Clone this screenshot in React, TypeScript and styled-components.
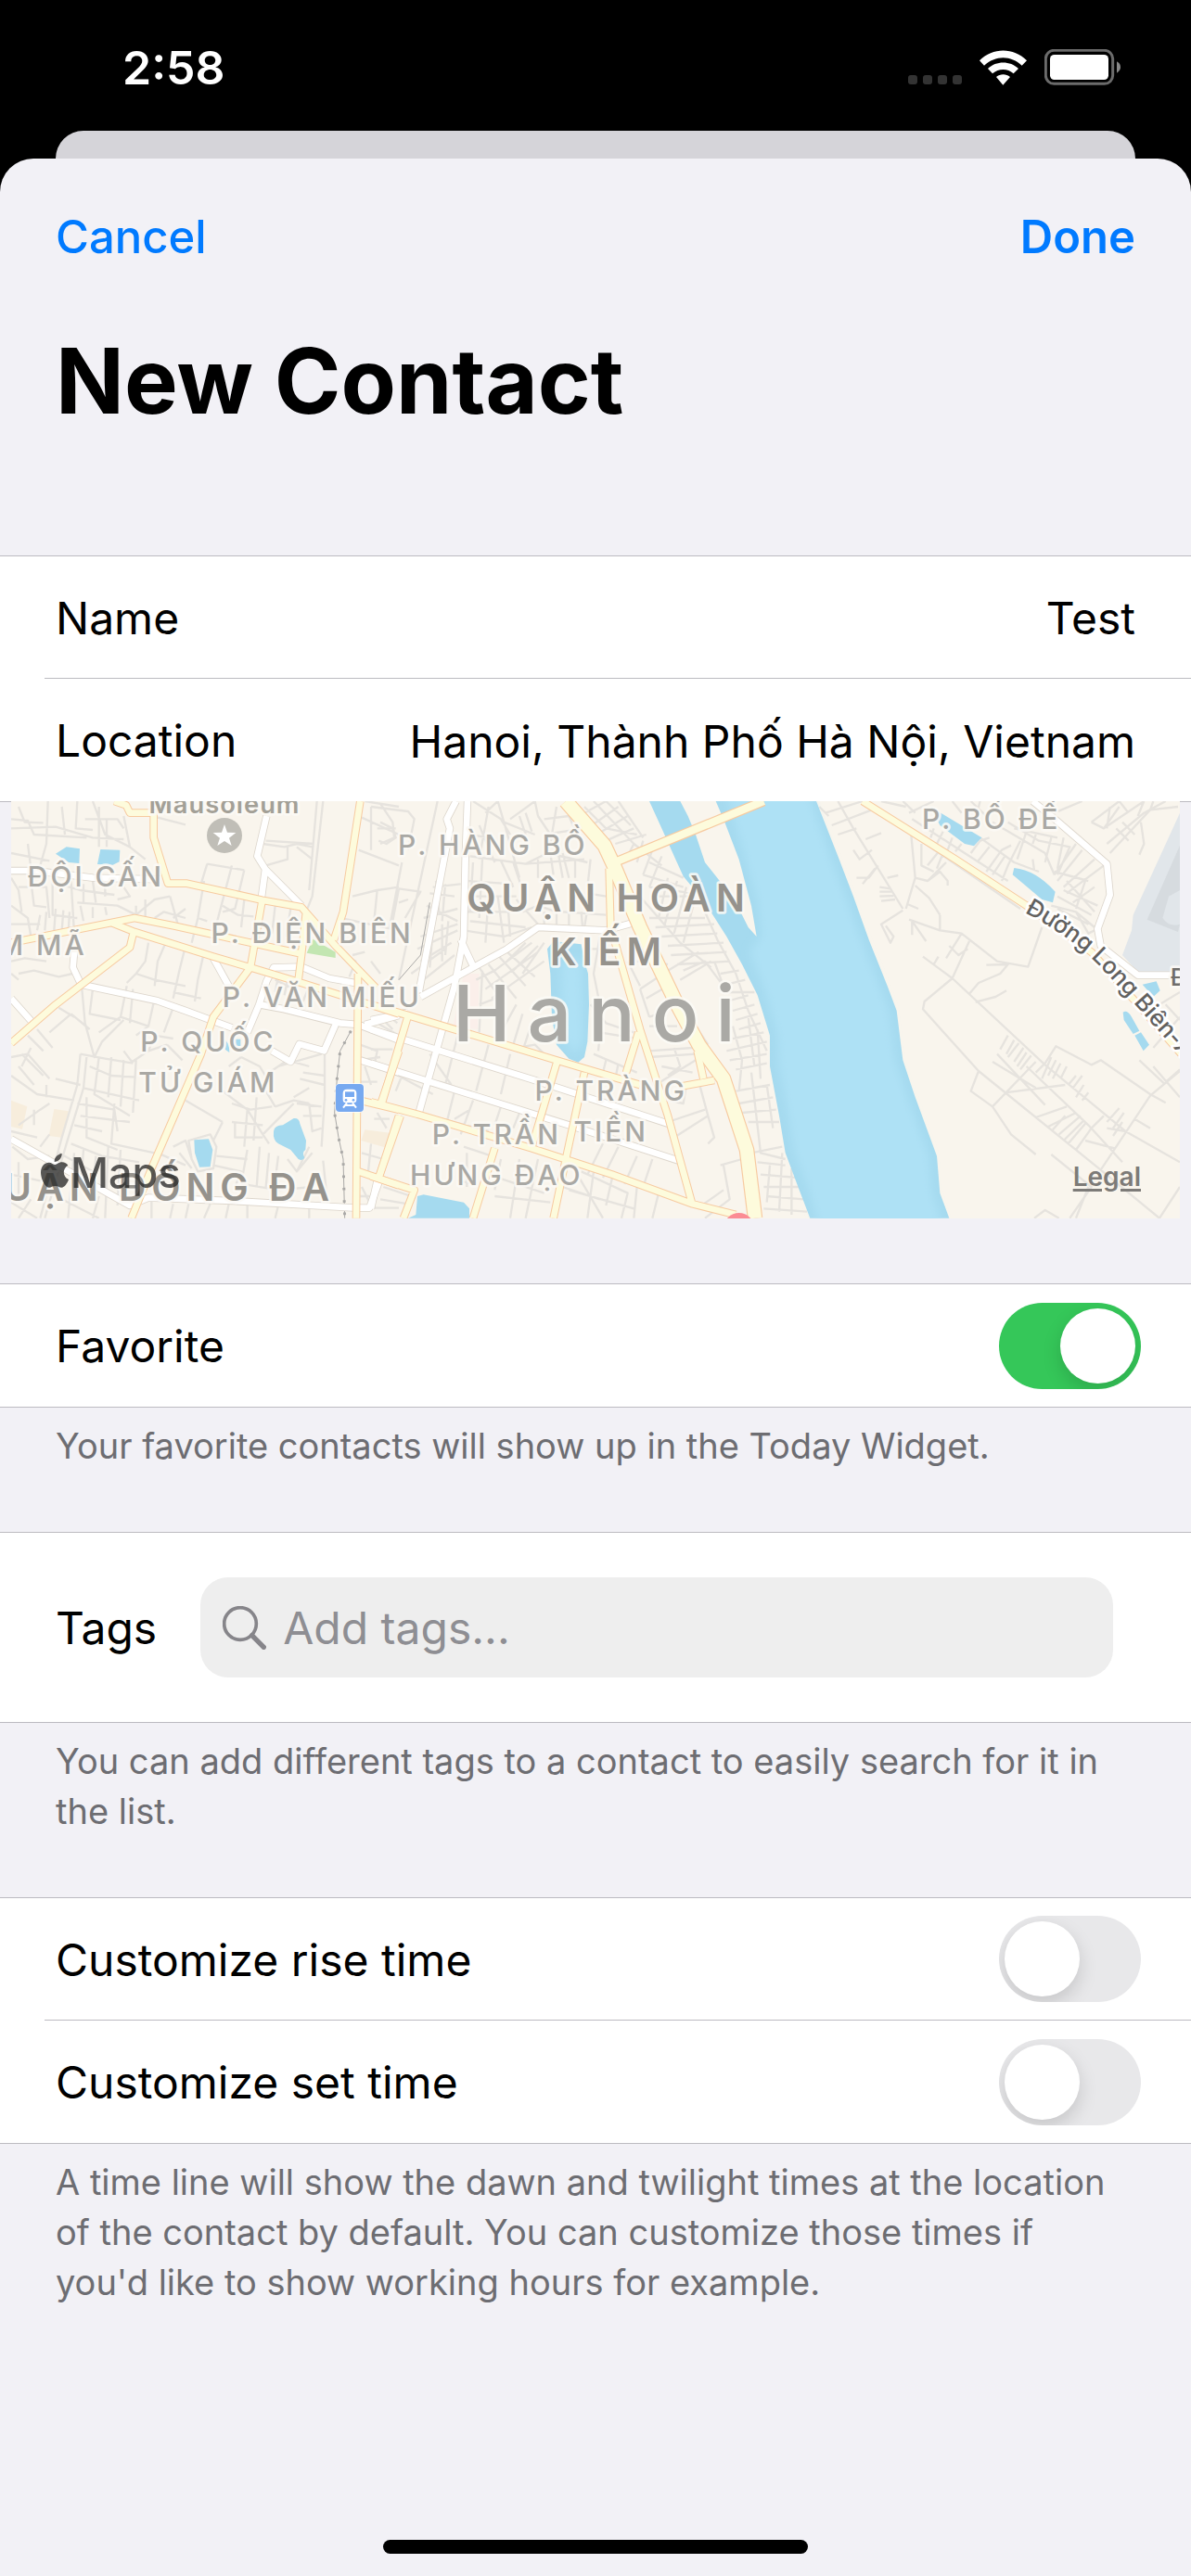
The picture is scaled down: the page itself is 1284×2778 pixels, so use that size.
import React, { useState } from "react";
import styled, { createGlobalStyle } from "styled-components";

const GlobalStyle = createGlobalStyle`
  *, *::before, *::after { box-sizing: border-box; }
  body { margin: 0; background: #000; }
  button, input { font: inherit; color: inherit; }
`;

const color = {
  sheet: "#f2f1f6",
  line: "#bcbbc1",
  blue: "#007aff",
  green: "#35c759",
  footer: "#6d6d72",
  placeholder: "#8e8e93",
};

const Screen = styled.div`
  display: flex;
  flex-direction: column;
  min-height: 100vh;
  background: #000;
  color: #000;
  font-family: Inter, "Liberation Sans", sans-serif;
  font-size: 48px;
  line-height: 60px;
`;

const StatusBar = styled.header`
  display: flex;
  align-items: center;
  justify-content: space-between;
  height: 141px;
  padding: 4px 75px 0 132px;
  color: #fff;
`;

const Clock = styled.time`
  font-size: 50px;
  font-weight: 600;
`;

const StatusIcons = styled.div`
  display: flex;
  align-items: flex-end;
  gap: 19px;
  svg { display: block; }
`;

const Signal = styled.div`
  display: flex;
  gap: 6px;
  margin-bottom: 1px;
`;

const SignalDot = styled.i`
  width: 10px;
  height: 10px;
  border-radius: 3px;
  background: #333;
`;

const BackCard = styled.div`
  height: 30px;
  margin: 0 60px;
  border-radius: 30px 30px 0 0;
  background: #d5d4d9;
`;

const Sheet = styled.main`
  display: flex;
  flex: 1;
  flex-direction: column;
  border-radius: 36px 36px 0 0;
  background: ${color.sheet};
`;

const NavBar = styled.nav`
  display: flex;
  justify-content: space-between;
  padding: 55px 60px 0;
`;

const NavButton = styled.button<{ $strong?: boolean }>`
  padding: 0;
  border: 0;
  background: none;
  color: ${color.blue};
  font-size: 49px;
  font-weight: ${(p) => (p.$strong ? 600 : 500)};
`;

const Title = styled.h1`
  margin: 65px 60px 128px;
  font-size: 97px;
  font-weight: 700;
  line-height: 120px;
`;

const Group = styled.section<{ $open?: boolean }>`
  border-top: 1px solid ${color.line};
  border-bottom: ${(p) => (p.$open ? "0" : `1px solid ${color.line}`)};
  background: #fff;
`;

const Row = styled.div<{ $end?: number; $height?: number }>`
  display: flex;
  align-items: center;
  justify-content: space-between;
  min-height: ${(p) => p.$height ?? 132}px;
  margin-left: 48px;
  padding: 0 ${(p) => p.$end ?? 60}px 0 12px;
  &:not(:last-child) { border-bottom: 1px solid ${color.line}; }
`;

const RowLabel = styled.label`
  padding-top: 2px;
`;

const ValueInput = styled.input`
  flex: 1;
  min-width: 0;
  height: 72px;
  padding: 2px 0 0;
  border: 0;
  outline: 0;
  background: none;
  text-align: right;
`;

const Footer = styled.p`
  margin: 0;
  padding: 14px 60px 66px;
  color: ${color.footer};
  font-size: 38px;
  line-height: 54px;
`;

const Toggle = styled.input`
  flex: none;
  appearance: none;
  width: 153px;
  height: 93px;
  margin: 0;
  padding: 6px;
  overflow: hidden;
  border-radius: 47px;
  background: #e8e8ea;
  &::before {
    content: "";
    display: block;
    width: 81px;
    height: 81px;
    border-radius: 50%;
    background: #fff;
    box-shadow: 0 8px 20px rgba(0, 0, 0, 0.15);
  }
  &:checked { background: ${color.green}; }
  &:checked::before { margin-left: auto; }
`;

const SearchBox = styled.div`
  display: flex;
  flex: 1;
  align-items: center;
  gap: 18px;
  min-width: 0;
  height: 108px;
  margin-left: 47px;
  padding: 0 24px;
  border-radius: 30px;
  background: #eee;
`;

const SearchInput = styled.input`
  flex: 1;
  min-width: 0;
  padding: 2px 0 0;
  border: 0;
  outline: 0;
  background: none;
  &::placeholder { color: ${color.placeholder}; opacity: 1; }
`;

const MapSection = styled.section`
  margin-bottom: 70px;
  padding: 0 12px;
  box-shadow: inset 0 1px ${color.line};
`;

const MapFrame = styled.div`
  position: relative;
  height: 450px;
  overflow: hidden;
  background: #f9f5ed;
`;

const MapDrawing = styled.svg`
  display: block;
  width: 100%;
  height: 100%;
  font-family: Inter, "Liberation Sans", sans-serif;
`;

const MapBrand = styled.div`
  position: absolute;
  left: 32px;
  bottom: 19px;
  display: flex;
  align-items: center;
  gap: 2px;
  color: #222;
  font-size: 45px;
  font-weight: 500;
  line-height: 60px;
  opacity: 0.75;
  svg { margin-bottom: 6px; }
`;

const LegalLink = styled.a`
  position: absolute;
  right: 42px;
  bottom: 29px;
  color: #7d7b78;
  font-size: 28px;
  font-weight: 600;
  line-height: 32px;
  text-decoration: underline;
  text-decoration-thickness: 3px;
  text-underline-offset: 3px;
`;

const HomeIndicator = styled.div`
  width: 458px;
  max-width: 60%;
  height: 15px;
  margin: auto auto 24px;
  border-radius: 8px;
  background: #000;
`;

type Tile = {
  x: number;
  minor: string;
  white: string;
  yellow: string;
  wide?: string;
};

const tiles: Tile[] = [
  {
    x: 0,
    minor:
      "M36 130L180 125L300 160L400 165M155 42L150 180L130 250M36 100L90 105L110 150L280 160M250 42L245 130L300 135M300 42L340 150L420 190M60 60L80 110L140 112M200 60L210 150M275 100L380 100L400 130M320 60V190M345 100V190M400 90L420 190L470 230M36 210L160 235M90 180L100 260M36 290L60 330L70 400M60 320H150L160 420M100 300L110 380L150 385M170 290V410L250 420M190 310L260 330L370 345M230 300L240 470M250 370L380 380L440 410M270 310V370M300 300L310 370M340 310V350M400 320L420 350L380 360M36 380L90 420L100 480M130 410L120 460M150 400L145 460M180 390L175 460M205 395L200 460M225 400L222 450M36 440H130M260 380L270 430M300 385V420M340 385L345 410M440 380V410M440 410L500 360L550 350M470 360V420M500 420L530 400L600 420M550 350L575 440M600 390L560 420M510 95L600 118M500 70L560 60M660 300L640 420L620 500M640 420L670 430M670 245L650 310M670 245L790 265M750 250L700 440M790 265L760 390L720 400M720 380L770 410L820 415M850 180L920 190L960 180L1010 190M860 170L1015 180M930 190V230L860 250M1045 42L1010 350L990 400M1025 42L1000 330M960 190L1010 230M790 360L780 450M890 380L880 470M940 390L925 480M1180 42L1290 60M1170 95L1290 150M1160 200L1290 250M1200 60V200M1230 110L1270 130L1280 160L1250 180L1225 170M1140 350L1220 330L1290 320M1220 330L1210 430M1100 420L1290 460M60 600L110 590L190 610L235 600M36 560L80 550L150 560M36 600L60 620M480 500L470 560L440 600L410 630M540 490L510 560L500 640M600 510L580 590L560 680M660 530L640 620L630 690M440 600L500 620L600 640M560 660L650 680M410 640L390 740L320 790M300 650L290 730L390 750M390 740L480 770M430 650L420 760M500 680L480 770L440 800M560 710L530 790M265 650L275 760L305 870L330 820L400 750M230 730L290 780M230 730L160 790M190 710L240 740M36 870L90 860L160 940M90 800L140 850M120 780L170 840M70 860L140 930M60 900L110 960M100 840L70 900M36 930L120 990L240 1010M260 860L250 960L200 1130L130 1391M280 870L270 970L215 1150L145 1391M180 940L260 960M150 960V1000M260 860L340 875L430 890M290 900L360 930L440 935M320 870L305 990L420 1060M360 870L350 1000M400 880L390 1030M440 880L430 1050M270 970L450 1010M250 1020L370 1040L380 1110M260 1060L420 1080M370 1020L360 1150L500 1180M280 1000V1130L380 1170M240 1090L330 1110M230 1150L330 1190L450 1210M240 1180L220 1391M270 1170L260 1300M310 1190L300 1320M350 1160L340 1391M390 1170L380 1350M190 1180L300 1240M130 1160L160 1120M36 1110L120 1130M60 1090L130 1040L160 1020M110 1040V1090M36 1250L130 1270M60 1210V1330M36 1340L120 1391M100 1330L60 1391M40 1160L90 1200L160 1190M200 1330L320 1391M320 1320L300 1391M420 890L480 850L540 830M480 850L500 800L560 810M540 830L590 880M430 890L400 850M510 1180L600 1220M600 1010L720 1080M720 1080L690 1140M560 1160L600 1140L620 1200M580 1180L620 1230M610 1140L680 1120L700 1160L690 1230L640 1240L620 1200ZM690 1220L780 1240L760 1290M700 1190L800 1200M750 1020L810 1040L880 1030M720 980L800 1040L790 1160M800 1040L850 1120L870 1150M750 1080L850 1090M760 1080V1130H850M830 1000L820 1140M850 1120L900 1070L950 1020M890 1030L950 1010L1000 1020M860 980L890 1030M870 950L840 900L780 870M780 870L740 900M870 920L930 880L900 900M930 880L1000 900M1050 860V1000L1040 1160M1040 860L900 900M980 920L1050 930M970 940L1050 960M960 1020L1040 1030M950 1000L1000 970M1000 1020L1010 1110L1040 1100M980 1060L1040 1060M800 1170L780 1280M840 1160L830 1290M870 1180L860 1290M900 1190L890 1270M930 1200L960 1240L1010 1180M780 1280L900 1300L1010 1290M1000 1160L960 1240M1045 1205L1060 1350M1090 530L1150 560L1130 610M1140 540L1180 530M890 620L950 650M900 610L890 660M930 620L920 670M960 630L950 690M1000 640L980 690M1200 560L1230 600M1160 880L1230 870M1165 950H1220M1180 900L1200 960M1165 830L1220 850L1210 900M1220 760L1290 800M1230 740L1270 780M1250 730L1285 760M1170 1180L1240 1200M1200 1150L1190 1250M1170 1290L1200 1350M1165 1320H1200M1195 1358H1290M490 1330V1391M560 1345L550 1391M610 1345L600 1391M680 1345L660 1391M740 1345L730 1391M800 1350V1391M900 1350L890 1391M1000 1355V1391",
    white:
      "M36 267H110L300 290L520 295M862 90L832 220L858 262L845 360M858 262L975 380M240 530L236 580L262 635L510 688L600 720L750 775M36 680L100 752M690 550L740 640M1160 632L1065 615L975 578L885 580L862 625L838 700L800 790M838 700L920 715L1100 760L1160 765L1290 815M1180 765L1290 735M880 850L940 885L968 828L1048 850L1085 765M1165 880L1290 920M36 1135L420 1350L480 1325L750 1335L1150 1358H1195L1225 1275",
    yellow:
      "M370 42L408 55L420 80H497V160L543 308H605L848 362L975 385L1085 510L1215 645M36 500L435 420L560 445L970 535M360 435L435 465L690 545L810 580L960 625L1180 695L1290 730M432 465L420 515L180 700L36 825M848 362L810 580L690 740L650 860L490 1230L425 1391M1165 42L1110 400L1080 490M990 400L975 540L965 620M1158 600L1152 1391M1290 850L1230 1025M1165 1010L1290 1040M1290 1060L1225 1260M1160 1240L1290 1285",
  },
  {
    x: 1200,
    minor:
      "M0 60L120 75L140 100L120 200M30 50L70 110L75 160L30 180M20 130L80 130M215 42L170 250L120 480L90 620M100 240L60 450M90 325L160 335L110 420M90 325L70 430M90 370L120 360M330 42L420 100L450 150M370 80L410 42M410 42L430 110L530 150M450 100L530 42L540 90M480 90L500 150M500 80L520 140M430 110L480 290M380 60L350 230M350 120L400 240M320 150L380 160M560 100L640 90M540 90L600 180L620 290M560 150L690 130M600 60L580 180M640 90L680 180M320 220L500 245L690 230M330 240L320 400M360 230L350 420M420 235L460 320M460 240L490 330M500 245L570 210L700 240M540 230V290M580 210L590 280M620 210L640 290M660 230V290M710 230L700 320M310 300L460 310M310 350L470 350M310 400H450M380 350L370 500M410 350L430 500M440 340L450 480M320 430L500 450M300 460L430 480L520 450M470 360L540 440M490 400L540 380L600 400M560 400V450M600 400V460M640 400V460M680 400L685 460M710 330L690 450M620 400L760 410M700 340L760 350M190 340L270 350M180 380L280 430M200 320L290 310M170 420L280 390M210 300L220 400M240 310L230 430M160 480L280 440M150 520L280 460M200 460L190 580M230 440V560M250 430L240 540M160 560L260 500M130 600L240 520M170 620L270 540M350 580L430 700M380 570L470 680M410 540L500 640M440 530L530 610M340 620L400 590L520 500M370 650L540 530M390 680L560 560M440 560L500 500M460 590L540 510M490 600L560 500M360 590L350 790M350 700L430 670M470 700L420 790M490 730L460 830M520 760L490 850M470 840L530 830L560 860M740 480L720 600L740 700M710 520L770 520M710 700L760 760L850 790M740 790L860 810M740 800L735 850M720 860L860 920M760 880L750 920M800 890L790 940M830 560L870 640M860 560L960 570M870 650L900 740M890 680L960 640M900 740L960 720M870 650L960 590M900 770L990 770M900 850L1040 840M900 870L1050 860M920 960L1050 880M980 840L1000 900L960 930M940 900L1040 920M960 1080L1080 1040M980 1130L1090 1060L1110 1130L1090 1150M1060 950L1090 1060M1020 960L1010 1020L960 1010M1130 1220L1200 1200M1140 1220L1160 1330L1080 1391M1140 1300L1070 1350M690 60L760 130L860 150M720 42L850 180L940 250M760 42L840 120M800 42L880 160M690 80L760 42M700 130L800 60M730 150L830 90M760 170L850 130M790 180L890 150M850 180L830 220M880 170L860 240M910 200L880 280M940 220L900 320M900 240L1010 290M880 280L1010 320M900 320L1040 340M930 350L1050 350M960 290L930 420M990 300L950 440M1020 320L980 470M1050 350L1010 500M900 420L1080 420M920 450L1110 440M940 480L1120 470M960 510L1140 500M970 540L1150 530M990 570L1160 560M960 590L1060 530M1000 620L1100 560M1010 590L1080 560L1140 640M870 350L1000 500L1100 580M1080 400L1120 490L1180 600L1220 720L1280 850M1110 560L1140 640M1130 600L1190 590M1130 640L1210 620M1140 660L1240 660M1150 690L1220 670M1170 720L1240 700M1180 750L1250 730M1190 780L1260 760M1170 810L1270 790M1150 850L1280 820M1160 880L1280 860M1180 910L1280 890M1170 770L1200 880L1190 980M1220 740L1240 900M1250 780L1260 940M1180 980L1290 960M1190 1020L1300 1000M1200 1050L1310 1040M1220 1080L1320 1080M1230 920L1260 1180L1340 1200M1280 960L1300 1100M1230 1180L1330 1160M1250 1210L1340 1220M1260 1250L1380 1260M1270 1290L1390 1290M1280 1320L1400 1330M1270 1360L1410 1370M1290 1220L1280 1340M1330 1180L1320 1370M1360 1230V1380M1050 770L1090 830M280 800L240 960M380 830L340 980M450 860L420 990M270 870L420 910M190 860L260 960M260 960L220 950M70 920L200 990M100 930L80 980M270 980L240 1100M330 1010L290 1120M420 1030L400 1090M480 1050L460 1100M230 1070L380 1110M270 1070L320 1040M750 1150L700 1250M800 1160L750 1260M860 1190L820 1280M910 1200L880 1290M650 1220L750 1391M640 1300L850 1360M680 1240L830 1310L810 1391M720 1240L700 1391M780 1260L760 1350M860 1290L850 1391M930 1310L910 1391M620 1290L740 1330M380 1250L560 1310M420 1200L400 1300M480 1200L450 1391M540 1200L500 1391M400 1320L580 1340M300 1160L390 1190M310 1180V1290M280 1270L340 1280M40 1290L130 1320M30 1330L120 1345M80 1100L100 1060M10 1070H60M20 1050L50 1100M0 845H70",
    white:
      "M275 42L245 100L255 130L155 660M312 42L305 230L300 480L270 640L155 1050M290 490L330 575M160 675L330 580L440 520L540 450L760 460L850 435M0 750L120 725M0 780L530 945L960 1085M0 890L190 950L640 1090L995 1205M20 1270L0 1360",
    yellow:
      "M770 260L775 450L870 780L960 1060L1040 1350M0 700L120 735L600 880L870 960M1000 965L1110 945M865 790L825 920M1055 850L1075 940M600 890L520 1160M690 920L630 1200L590 1391M0 1015L150 1055L520 1165L780 1250L1040 1345L1180 1380M120 735L35 1020M95 1060L25 1260M0 1255L140 1300L105 1391M400 1165L330 1391",
    wide: "M630 42L755 185L790 260L870 450L985 690L1060 830L1140 940L1215 1170L1242 1391",
  },
  {
    x: 2520,
    minor:
      "M130 60L160 90M190 42L240 130L400 390M150 80L270 42M170 120L300 70M190 150L250 130M240 200L260 230L300 200M280 165L330 145M250 290L290 290L320 250M270 310L310 260M350 290L385 282M325 320L360 325M325 335L365 335M325 350L370 348M330 365L375 360M400 395L330 440L360 500L370 480L345 445M410 390L440 290L425 130M415 375L450 390M440 315L485 355L520 410M420 425L520 460L590 470L705 560L805 578L850 450M430 430V475M430 430L475 495M520 410V460M440 290L480 300L540 240M480 300L520 270L545 300V315M460 180V250L500 270M480 250L520 200M510 260L530 210M590 470L540 550M615 495L560 615L470 690L465 715L645 915L1040 1235L1230 1391M550 510L580 540L610 520M465 545L560 615L860 895L1060 1060L1120 1110L1296 1210M500 570L515 545M615 665L645 630L715 600L740 570L670 572M635 692L700 675L735 655M645 915L620 980L690 1030L750 1120L830 1185M690 1030L830 885M740 800L715 845M760 815L735 860M775 825L740 870M790 840L760 885M800 855L770 900M815 865L780 910M705 860L860 1025M690 885L830 970M800 900L1000 1090L1110 1210M860 890L895 835L1010 895L1040 880L1200 990L1250 1018M860 890L830 920M880 870L850 940M895 880L870 930M910 890L885 940M930 900L910 940M935 960L960 930M950 970L980 930M960 1000L985 960M980 1010L1000 985M925 960L730 985M930 1030L830 1065M960 1050L870 1095M925 1060L885 1105M975 1060L905 1120M985 1075L920 1140M990 1085L935 1150M1010 1100L960 1170M1050 1060L1010 1100M1060 1080L1100 1035M1080 1100L1115 1050M1110 1080L1080 1125M1060 1100L1120 1110M990 1140L1085 1165M1040 1235L1130 1100L1200 995L1296 915M1150 1070L1200 1100M1165 880L1245 955M1210 900L1296 1000M1245 955L1296 910M880 1185L1010 1290L940 1391M1000 1290L960 1391M1296 1290L1230 1391M825 1391L860 1365L905 1391M430 100L600 210L740 300M430 150L780 390M500 130L490 160M530 140L510 180M560 160L545 200M590 180L570 205M620 210L650 170L680 160M640 240L680 190M670 270L720 200L750 185M690 280L730 220M720 300L740 250L780 170M650 160L760 240L840 270M690 110L860 210L890 280M740 110L840 170L940 190L900 280M760 130L900 160M800 140L770 230M830 150L820 180M880 160L860 240M920 160L900 260M960 180L890 280M980 200L900 300M1020 230L920 320M1050 250L930 340M890 270L1000 300M930 300L1020 400M920 330L1030 380M900 350L1010 410M950 370L1020 320M990 300L960 390M880 380L960 400L1020 450M900 390L1000 440M960 400L1000 470L1020 460M820 230L825 265M890 80L980 42M1010 110L1100 42M1010 110L1050 130L1180 42M1070 60L1060 130M1050 130L1100 60M1060 180L1180 80L1250 42M1070 210L1200 70M1090 130L1130 170M1110 110L1150 150M1170 110L1180 180L1165 215M1210 42L1200 70L1290 60M1100 42L1130 80M1180 42L1160 90M1230 700L1296 660M1210 840L1296 740M1250 700L1296 750M400 42L440 80M420 80L500 42M560 42L590 80M620 42L680 100M650 42L640 80M330 42L410 60",
    white:
      "M820 42L880 90L1060 245L1070 345L1030 455L1040 510L1160 605H1296",
    yellow: "M270 42L570 230L800 380L1010 530L1170 710L1300 860",
  },
];

type LabelProps = {
  x: number;
  y: number;
  size?: number;
  gap?: number;
  fill?: string;
  weight?: number;
  anchor?: "start" | "middle" | "end";
  children: string;
};

const MapLabel = ({ x, y, size = 90, gap = 9, fill = "#a9a8a4", weight = 500, anchor = "middle", children }: LabelProps) => (
  <text
    x={x}
    y={y}
    fontSize={size}
    fontWeight={weight}
    letterSpacing={gap}
    fill={fill}
    textAnchor={anchor}
    stroke="#fcfaf6"
    strokeOpacity="0.85"
    strokeWidth="16"
    strokeLinejoin="round"
    paintOrder="stroke"
  >
    {children}
  </text>
);

const Roads = ({ kind, stroke, width }: { kind: "minor" | "white" | "yellow" | "wide"; stroke: string; width: number }) => (
  <g fill="none" stroke={stroke} strokeWidth={width} strokeLinejoin="round">
    {tiles.map((t) => t[kind] && <path key={t.x} d={t[kind]} transform={`translate(${t.x} 0)`} />)}
  </g>
);

const CityMap = () => (
  <MapDrawing viewBox="36 42 3780 1350" preserveAspectRatio="xMidYMid slice" role="img" aria-label="Map of Hanoi">
    <defs>
      <filter id="shallows" x="-10%" y="-10%" width="120%" height="120%">
        <feGaussianBlur stdDeviation="14" />
      </filter>
    </defs>
    <rect x="-2000" width="8000" height="1500" fill="#f9f5ed" />
    <g fill="#f7eddc">
      <path d="M36 1010L88 1030L72 1103L36 1095ZM175 1038L222 1045L200 1130L158 1125ZM1180 1105L1260 1115L1255 1165L1168 1140Z" />
      <path d="M1500 600L1550 600L1545 780L1465 770Z" fill="#fbefea" />
    </g>
    <path d="M1012 488L1085 530V549L992 533Z" fill="#c3e6b2" />
    <g transform="translate(2520 0)">
      <path d="M1296 80L1145 410L1140 460L1110 540L1160 595H1296Z" fill="#e1e6ea" />
      <path d="M1296 185L1190 425L1290 465L1296 440Q1260 450 1240 420L1260 350L1296 330Z" fill="#d6dbdf" />
    </g>
    <Roads kind="minor" stroke="#e6e3de" width={7} />
    <g fill="#a5daef">
      <path d="M180 212L215 190L258 196L256 243L222 240ZM325 198L388 200L386 238L365 248L315 246ZM628 1138L675 1135L688 1170L680 1225L645 1226L630 1180Z" />
      <path d="M885 1110Q888 1090 915 1090L950 1068Q968 1066 970 1085L990 1140L988 1170Q975 1178 985 1195Q980 1208 965 1200L940 1170L900 1150Q882 1140 885 1110Z" />
      <path d="M730 815L740 830L742 855L728 845ZM760 812H778V834H762Z" />
      <g transform="translate(1200 0)">
        <path d="M900 42L940 130L985 230L1010 285L1080 370L1150 480L1200 570L1250 670L1290 800V900L1320 1060L1340 1180L1385 1300L1420 1391H1870L1840 1310L1830 1190L1760 1000L1720 880L1700 720L1670 640L1610 490L1560 350L1510 220L1440 42Z" />
        <path d="M570 520L590 495L680 505L690 560L702 600L705 700L700 820L690 870L670 887L640 875L600 830L585 740L580 600Z" />
        <path d="M150 1320L170 1315L300 1340L318 1360V1391H120L145 1380Z" />
      </g>
      <g transform="translate(2520 0)">
        <path d="M490 60L655 160L630 187L600 180L520 120ZM760 258Q830 265 893 335L885 370L850 360L755 280ZM1175 635L1220 625L1232 655L1210 675ZM1112 725Q1125 715 1140 740L1165 785L1145 795L1115 750ZM1150 800L1170 790L1197 830L1178 850Z" />
      </g>
    </g>
    <g fill="#aee1f5" transform="translate(1200 0)" filter="url(#shallows)">
      <path d="M1150 20L1200 190L1250 370L1262 480L1225 530L1275 660L1315 800L1320 900L1350 1060L1370 1180L1415 1300L1450 1420H1850L1815 1310L1805 1190L1735 1000L1695 880L1675 720L1645 640L1585 490L1535 350L1485 220L1415 20Z" />
      <path d="M615 560L680 550L685 820L660 860L620 800Z" />
    </g>
    <path d="M2200 42H2315L2340 100L2390 230L2430 380L2447 480L2420 450L2380 370L2320 290L2280 240L2250 150L2225 90Z" fill="#f9f5ed" />
    <path d="M1135 785L1100 850L1090 940L1082 1050L1095 1130L1110 1200L1115 1391M1390 370L1360 540L1290 620" fill="none" stroke="#aaa9a7" strokeWidth="3" />
    <path d="M1135 785L1100 850L1090 940L1082 1050L1095 1130L1110 1200L1115 1391" fill="none" stroke="#aaa9a7" strokeWidth="9" strokeDasharray="8 32" />
    <Roads kind="white" stroke="#ddd6cc" width={25} />
    <Roads kind="white" stroke="#fff" width={20} />
    <Roads kind="yellow" stroke="#f7caa0" width={26} />
    <path d="M2000 235L2470 42" fill="none" stroke="#f7caa0" strokeWidth="32" />
    <Roads kind="wide" stroke="#f7caa0" width={50} />
    <Roads kind="yellow" stroke="#fdfbdc" width={20} />
    <path d="M1995 237L2470 42" fill="none" stroke="#fdfbdc" strokeWidth="25" />
    <Roads kind="wide" stroke="#fdfbdc" width={43} />

    <circle cx="726" cy="153" r="57" fill="#c0beb7" />
    <path d="M726 117L735 143L763 144L741 161L749 186L726 171L703 186L711 161L689 144L717 143Z" fill="#fff" />
    <circle cx="2390" cy="1424" r="50" fill="#fb8c94" />

    <MapLabel x={726} y={80} size={82} gap={3} weight={600} fill="#a3a097">Mausoleum</MapLabel>
    <MapLabel x={310} y={317}>ĐỘI CẤN</MapLabel>
    <MapLabel x={281} y={540} anchor="end">KIM MÃ</MapLabel>
    <MapLabel x={1010} y={500}>P. ĐIỆN BIÊN</MapLabel>
    <MapLabel x={1042} y={707}>P. VĂN MIẾU</MapLabel>
    <MapLabel x={673} y={852}>P. QUỐC</MapLabel>
    <MapLabel x={673} y={983}>TỬ GIÁM</MapLabel>
    <MapLabel x={1083} y={1335} size={122} gap={18} weight={600} fill="#95928c" anchor="end">QUẬN ĐỐNG ĐA</MapLabel>
    <MapLabel x={1594} y={215}>P. HÀNG BỒ</MapLabel>
    <MapLabel x={1968} y={398} size={122} gap={18} weight={600} fill="#95928c">QUẬN HOÀN</MapLabel>
    <MapLabel x={1968} y={573} size={122} gap={18} weight={600} fill="#95928c">KIẾM</MapLabel>
    <MapLabel x={1948} y={818} size={252} gap={54} fill="#aaa9a5">Hanoi</MapLabel>
    <MapLabel x={1976} y={1010}>P. TRÀNG</MapLabel>
    <MapLabel x={1976} y={1143}>TIỀN</MapLabel>
    <MapLabel x={1606} y={1152}>P. TRẦN</MapLabel>
    <MapLabel x={1606} y={1283}>HƯNG ĐẠO</MapLabel>
    <MapLabel x={3206} y={133}>P. BỒ ĐỀ</MapLabel>
    <MapLabel x={3785} y={638} size={78} gap={0} fill="#6f6e6c" anchor="start">Đường</MapLabel>
    <path id="longBien" d="M3313 402Q3480 490 3570 590Q3700 730 3900 960" fill="none" />
    <text fontSize="76" fontWeight="500" fill="#62615f" stroke="#fff" strokeWidth="16" strokeLinejoin="round" paintOrder="stroke">
      <textPath href="#longBien">Đường Long Biên-Xuân</textPath>
    </text>

    <rect x="1084" y="955" width="94" height="94" rx="14" fill="#fff" />
    <rect x="1086" y="957" width="90" height="90" rx="12" fill="#77a9f0" />
    <path d="M1122 974H1140Q1153 974 1153 987V1008Q1153 1018 1143 1018H1119Q1109 1018 1109 1008V987Q1109 974 1122 974Z" fill="#fff" />
    <path d="M1116 982H1146V999H1116Z" fill="#77a9f0" />
    <circle cx="1119" cy="1009" r="4" fill="#77a9f0" />
    <circle cx="1143" cy="1009" r="4" fill="#77a9f0" />
    <path d="M1122 1018L1110 1034M1140 1018L1152 1034M1117 1026H1145" stroke="#fff" strokeWidth="6" />
  </MapDrawing>
);

const AppleMark = () => (
  <svg width="30" height="37" viewBox="0 0 90 111" fill="currentColor" aria-hidden="true">
    <path d="M68 0C69 15 57 27 44 27C43 13 55 2 68 0ZM46 36C52 36 58 28 69 28C77 28 84 32 88 38C68 50 71 76 90 84C86 95 77 110 67 110C59 110 56 105 47 105C37 105 34 110 27 110C14 110 0 83 0 61C0 41 13 29 26 29C35 29 41 36 46 36Z" />
  </svg>
);

const WifiIcon = () => (
  <svg width="51" height="38" viewBox="348 100 153 114" fill="#fff" aria-hidden="true">
    <path d="M348 134C391 91 458 91 501 134L485 150C450 116 399 116 363 150ZM375 160C402 134 447 134 474 160L458 176C439 159 410 159 390 176ZM402 187C415 176 434 176 447 187L424 213Z" />
  </svg>
);

const BatteryIcon = () => (
  <svg width="83" height="39" viewBox="558 99 249 117" aria-hidden="true">
    <rect x="562" y="103" width="217" height="108" rx="27" fill="none" stroke="#6b6b6b" strokeWidth="9" />
    <rect x="576" y="117" width="189" height="81" rx="14" fill="#fff" />
    <path d="M792 139Q804 145 804 157T792 176Z" fill="#888" />
  </svg>
);

const SearchIcon = () => (
  <svg width="47" height="47" viewBox="0 0 141 141" fill="none" stroke="#86858a" aria-hidden="true">
    <circle cx="57" cy="57" r="52" strokeWidth="11" />
    <path d="M95 95L133 133" strokeWidth="16" strokeLinecap="round" />
  </svg>
);

const ToggleRow = ({ id, label, on }: { id: string; label: string; on?: boolean }) => {
  const [checked, setChecked] = useState(!!on);
  return (
    <Row $end={54}>
      <RowLabel htmlFor={id}>{label}</RowLabel>
      <Toggle id={id} type="checkbox" role="switch" checked={checked} onChange={(e) => setChecked(e.target.checked)} />
    </Row>
  );
};

export default function App() {
  return (
    <Screen>
      <GlobalStyle />
      <StatusBar>
        <Clock>2:58</Clock>
        <StatusIcons>
          <Signal>
            <SignalDot />
            <SignalDot />
            <SignalDot />
            <SignalDot />
          </Signal>
          <WifiIcon />
          <BatteryIcon />
        </StatusIcons>
      </StatusBar>
      <BackCard />
      <Sheet>
        <NavBar>
          <NavButton type="button">Cancel</NavButton>
          <NavButton type="button" $strong>Done</NavButton>
        </NavBar>
        <Title>New Contact</Title>

        <Group $open>
          <Row>
            <RowLabel htmlFor="name">Name</RowLabel>
            <ValueInput id="name" defaultValue="Test" />
          </Row>
          <Row>
            <RowLabel htmlFor="location">Location</RowLabel>
            <ValueInput id="location" defaultValue="Hanoi, Thành Phố Hà Nội, Vietnam" />
          </Row>
        </Group>
        <MapSection>
          <MapFrame>
            <CityMap />
            <MapBrand>
              <AppleMark />
              Maps
            </MapBrand>
            <LegalLink href="#legal">Legal</LegalLink>
          </MapFrame>
        </MapSection>

        <Group>
          <ToggleRow id="favorite" label="Favorite" on />
        </Group>
        <Footer>Your favorite contacts will show up in the Today Widget.</Footer>

        <Group>
          <Row $height={204} $end={84}>
            <RowLabel htmlFor="tags">Tags</RowLabel>
            <SearchBox>
              <SearchIcon />
              <SearchInput id="tags" placeholder="Add tags..." />
            </SearchBox>
          </Row>
        </Group>
        <Footer>You can add different tags to a contact to easily search for it in the list.</Footer>

        <Group>
          <ToggleRow id="rise" label="Customize rise time" />
          <ToggleRow id="set" label="Customize set time" />
        </Group>
        <Footer>
          A time line will show the dawn and twilight times at the location of the contact by default. You can
          customize those times if you'd like to show working hours for example.
        </Footer>
        <HomeIndicator />
      </Sheet>
    </Screen>
  );
}
